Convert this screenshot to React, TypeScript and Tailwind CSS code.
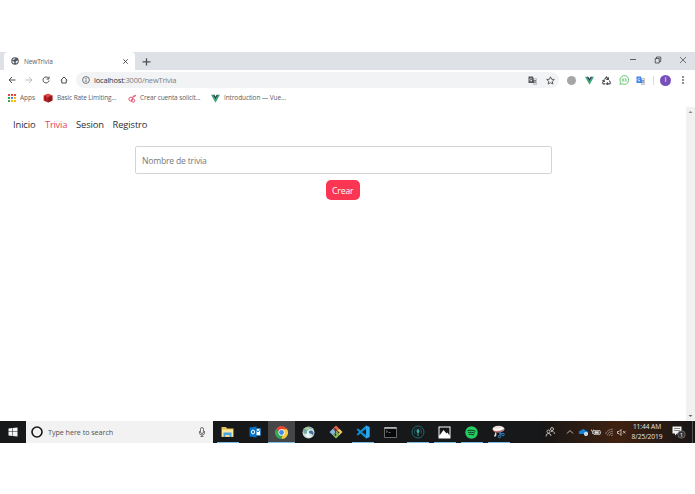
import React from 'react'

const VueLogo = ({size}: {size: number}) => (
  <svg width={size} height={size} viewBox="0 0 24 24">
    <path d="M0 2h6l6 11 6-11h6L12 23z" fill="#41a77b" />
    <path d="M5 2h4l3 5 3-5h4l-7 12z" fill="#293d4d" />
  </svg>
)

const Globe = () => (
  <svg width="8" height="8" viewBox="0 0 16 16">
    <circle cx="8" cy="8" r="7.5" fill="#50545a" />
    <path
      d="M2 8l3 .5 2 2-1 3q-4-2-4-5.500zM9 2q-1 3-3 3L4 7 3 5q2-3 6-3zM10 8l4-1q0 4-3 6l-2-2z"
      fill="#e8eaec"
    />
  </svg>
)

const Stroke = ({
  d,
  size = 8,
  color = '#4b4e52',
  width = 1.8,
}: {
  d: string
  size?: number
  color?: string
  width?: number
}) => (
  <svg
    className="shrink-0"
    width={size}
    height={size}
    viewBox="0 0 16 16"
    fill="none"
    stroke={color}
    strokeWidth={width}
  >
    <path d={d} />
  </svg>
)

const Translate = ({blue}: {blue?: boolean}) => (
  <svg width="9" height="9" viewBox="0 0 18 18">
    <path d="M8 5h9v12h-6z" fill="#dfe1e4" stroke="#9a9ea2" />
    <path d="M1 1h9l3 13H1z" fill={blue ? '#4384ed' : '#54585d'} />
    <path
      d="M8 6a2.500 2.500 0 1 0 0 3H6"
      fill="none"
      stroke="#fff"
      strokeWidth="1.3"
    />
    <path
      d="M12 9h4M15 9q0 3-2 4M13 11l3 3"
      fill="none"
      stroke={blue ? '#5578aa' : '#54585d'}
      strokeWidth="1.2"
    />
  </svg>
)

const TitleBar = () => (
  <div className="flex h-[18px] bg-[#dee1e6] pl-1">
    <div className="flex w-[131px] items-center rounded-t-[4px] bg-white pl-[7px] pr-[6px]">
      <Globe />
      <span className="ml-[5px] flex-1 pt-px text-[6.5px] tracking-[-0.14px] text-[#5b5e62]">
        NewTrivia
      </span>
      <Stroke d="M3 3l10 10m0-10L3 13" size={7} width={2.2} />
    </div>
    <div className="ml-[7px] flex items-center">
      <Stroke d="M8 2v13M1 8.500h14" size={9} width={2.2} />
    </div>
    <div className="ml-auto flex h-[15px] items-center gap-[17px] pr-[8px]">
      <Stroke d="M2 7h12" />
      <Stroke d="M2.500 5h8v9h-8zM5 5V2h8.500v9H11" width={1.8} />
      <Stroke d="M2 2l12 12M14 2L2 14" width={1.5} />
    </div>
  </div>
)

const Toolbar = () => (
  <div className="flex h-5 items-center pl-2">
    <Stroke d="M15 8H2M8 2L2 8l6 6" width={2} />
    <span className="w-[9px]" />
    <Stroke d="M1 8h13M8 2l6 6-6 6" color="#b4b6b9" />
    <span className="w-[9px]" />
    <Stroke d="M13 4.500A6 6 0 1 0 14 9M14 1v5H9" width={2} />
    <span className="w-[10px]" />
    <Stroke d="M1.500 8.500L8 2l6.500 6.500M3.500 7v7h9V7" width={2} />
    <div className="ml-[8px] flex h-4 w-[483px] items-center rounded-full bg-[#f1f3f4] pl-[6px] pr-[4px]">
      <svg width="8" height="8" viewBox="0 0 16 16">
        <circle
          cx="8"
          cy="8"
          r="6.8"
          fill="none"
          stroke="#5a5d61"
          strokeWidth="1.7"
        />
        <path d="M8 7v5M8 4v2" stroke="#5a5d61" strokeWidth="1.8" />
      </svg>
      <span className="ml-1 flex-1 pt-px text-[7.5px] tracking-[-0.19px] text-[#7d8084]">
        <span className="text-[#303236]">localhost</span>:3000/newTrivia
      </span>
      <Translate />
      <span className="w-[9px]" />
      <Stroke
        d="M8 1.500l2 4.300 4.700.5-3.500 3.200 1 4.800L8 11.900l-4.200 2.400 1-4.800-3.500-3.200 4.700-.5z"
        size={9}
        width={1.6}
      />
    </div>
    <div className="ml-[8px] size-[9px] rounded-full bg-[#a5a6a8]" />
    <div className="ml-[9px]">
      <VueLogo size={9} />
    </div>
    <svg
      className="ml-[8px]"
      width="9"
      height="9"
      viewBox="0 0 16 16"
      fill="none"
      stroke="#4b4e52"
      strokeWidth="1.8"
    >
      <path d="M4.500 6L8 1.500l3 4M11.500 2v4h-4M13 8l2 4-1 2H8.500M10.500 11.500L8 14l2.500 2M6 14H2l-1-2 2.500-4M.5 8.500l3-1 1.500 3" />
    </svg>
    <svg
      className="ml-[8px]"
      width="10"
      height="10"
      viewBox="0 0 16 16"
      fill="none"
      stroke="#5dc36e"
    >
      <path d="M1.500 15l1-3.500a7 7 0 1 1 2.500 2.500z" strokeWidth="1.5" />
      <path
        d="M5 5.500v5M5 8h2V5.500M7 8v2.500M9 6h2.500v4H9M9 8h2"
        strokeWidth="1.1"
      />
    </svg>
    <div className="ml-[7px]">
      <Translate blue />
    </div>
    <div className="ml-[8px] h-[9px] w-px bg-[#d9dbdd]" />
    <div className="ml-[6px] flex size-[11px] items-center justify-center rounded-full bg-[#7650b8] text-[7px] text-white">
      I
    </div>
    <svg
      className="ml-[8px]"
      width="8"
      height="10"
      viewBox="0 0 8 10"
      fill="#55585c"
    >
      <circle cx="4" cy="2" r=".9" />
      <circle cx="4" cy="5" r=".9" />
      <circle cx="4" cy="8" r=".9" />
    </svg>
  </div>
)

const Bookmarks = () => (
  <div className="flex h-[17px] items-center pb-px pl-2 text-[6.5px] tracking-[-0.12px] text-[#5b5e62]">
    <div className="grid grid-cols-3 gap-[1px]">
      <i className="size-[2px] bg-[#e9453b]" />
      <i className="size-[2px] bg-[#e9453b]" />
      <i className="size-[2px] bg-[#e9453b]" />
      <i className="size-[2px] bg-[#34a853]" />
      <i className="size-[2px] bg-[#4285f4]" />
      <i className="size-[2px] bg-[#fbbc05]" />
      <i className="size-[2px] bg-[#34a853]" />
      <i className="size-[2px] bg-[#fbbc05]" />
      <i className="size-[2px] bg-[#fbbc05]" />
    </div>
    <span className="ml-[4px] w-[23px] tracking-[0px]">Apps</span>
    <svg width="10" height="10" viewBox="0 0 16 16">
      <path d="M1 4l7-3 7 3v8l-7 3-7-3z" fill="#b52124" />
      <path d="M1 4l7-3 7 3-7 3z" fill="#dc4a46" />
      <path d="M8 7l7-3v8l-7 3z" fill="#981b20" />
      <path d="M4 5v8M11 5v8" stroke="#7f171b" />
    </svg>
    <span className="ml-[4px] w-[71px] whitespace-nowrap">
      Basic Rate Limiting...
    </span>
    <svg
      width="9"
      height="9"
      viewBox="0 0 16 16"
      fill="none"
      stroke="#dc4663"
      strokeWidth="1.6"
    >
      <circle cx="5" cy="9" r="3.5" />
      <circle cx="9" cy="11.500" r="3" />
      <path d="M8 6q1-4 6-4-1 4-6 4" fill="#ed8498" strokeWidth="1" />
    </svg>
    <span className="ml-[3px] w-[71px] whitespace-nowrap">
      Crear cuenta solicit...
    </span>
    <VueLogo size={9} />
    <span className="ml-[4px] whitespace-nowrap tracking-[-0.11px]">
      Introduction — Vue...
    </span>
  </div>
)

const Page = () => (
  <div className="flex h-[314px]">
    <main className="flex-1">
      <nav className="flex h-[35px] items-center gap-[9px] pl-[13px] pt-[2px] text-[9.4px] tracking-[-0.12px] text-[#2d3034]">
        <a className="w-[23px]">Inicio</a>
        <a className="w-[22px] tracking-[-0.25px] text-[#e84460]">Trivia</a>
        <a className="w-[27.5px]">Sesion</a>
        <a>Registro</a>
      </nav>
      <form className="ml-[135px] mt-[4px] flex w-[416.5px] flex-col items-center">
        <div className="flex h-7 w-full items-center rounded-[2px] border border-[#d2d4d6] pl-[6px] pt-[2px] text-[8.6px] tracking-[-0.2px] text-[#74797e]">
          Nombre de trivia
        </div>
        <button
          type="button"
          className="mr-[1px] mt-[6px] h-5 w-[34px] rounded-[5px] bg-[#fa3653] pt-[2px] text-[8.6px] tracking-[-0.1px] text-white"
        >
          Crear
        </button>
      </form>
    </main>
    <div className="flex w-[9px] flex-col items-center justify-between bg-[#f1f1f1] py-[3px]">
      <svg width="5" height="4" viewBox="0 0 5 4">
        <path d="M.5 3l2-2 2 2z" fill="#85878a" />
      </svg>
      <svg width="5" height="4" viewBox="0 0 5 4">
        <path d="M.5 1l2 2 2-2z" fill="#65676a" />
      </svg>
    </div>
  </div>
)

const Explorer = () => (
  <svg width="13" height="12" viewBox="0 0 26 24">
    <path d="M1 2h9l2 3h13v17H1z" fill="#e8bf55" />
    <path d="M2 7h22v14H2z" fill="#fbe6a0" />
    <path d="M5 13h16v9h-4v-4H9v4H5z" fill="#49a5df" />
  </svg>
)

const Outlook = () => (
  <svg width="12" height="12" viewBox="0 0 24 24">
    <path d="M12 5h11v14H12z" fill="#fff" stroke="#0872c6" strokeWidth="1.5" />
    <path
      d="M13 6l5 6 5-6"
      fill="none"
      stroke="#0872c6"
      strokeWidth="2"
    />
    <path d="M1 3l14-2v22L1 21z" fill="#0872c6" />
    <ellipse
      cx="8"
      cy="12"
      rx="3"
      ry="4"
      fill="none"
      stroke="#fff"
      strokeWidth="2"
    />
  </svg>
)

const Chrome = () => (
  <svg width="13" height="13" viewBox="0 0 24 24">
    <path d="M12 12L1.600 6a12 12 0 0 1 20.800 0z" fill="#e44738" />
    <path d="M12 12V6h10.400A12 12 0 0 1 12 24z" fill="#f8cb3d" />
    <path d="M12 12l2 6-2 6A12 12 0 0 1 1.600 6z" fill="#36a853" />
    <circle cx="12" cy="12" r="5.800" fill="#fff" />
    <circle cx="12" cy="12" r="4.500" fill="#4786ed" />
  </svg>
)

const Cmder = () => (
  <svg width="13" height="13" viewBox="0 0 24 24">
    <circle cx="12" cy="12" r="11" fill="#c9dadd" />
    <path d="M2 9q3-8 11-7 5 1 7 4-8-3-10 3-1 5 3 8-9 2-11-8z" fill="#76a9a0" />
    <path d="M5 5q5-4 11-1l-7 3z" fill="#b9d389" />
    <path d="M4 13q6 5 5-3 3-4 7-2-5 2-3 7 2 4 6 4-9 7-15-6z" fill="#eef4f5" />
    <path d="M12 11q3-4 7-2 4 4 1 8-2-4-5-3z" fill="#39719c" />
  </svg>
)

const Git = () => (
  <svg width="14" height="14" viewBox="0 0 28 28">
    <path d="M14 1l6.500 6.500L14 14 7.500 7.500z" fill="#ef6550" />
    <path d="M7.500 7.500L14 14l-6.500 6.500L1 14z" fill="#82b6df" />
    <path d="M20.500 7.500L27 14l-6.500 6.500L14 14z" fill="#efd257" />
    <path d="M14 14l6.500 6.500L14 27l-6.500-6.500z" fill="#8ac365" />
    <path d="M9 5l10 10M13 9v11" stroke="#333" strokeWidth="1.500" />
    <circle cx="13" cy="9" r="2" fill="#333" />
    <circle cx="19" cy="15" r="2" fill="#333" />
    <circle cx="13" cy="20" r="2" fill="#333" />
  </svg>
)

const Code = () => (
  <svg width="14" height="14" viewBox="0 0 28 28">
    <path
      d="M20 1l7 3v20l-7 3L9 17l-5 4-3-2 5-5-5-5 3-2 5 4zM20 8l-8 6 8 6z"
      fill="#168bd2"
      fillRule="evenodd"
    />
    <path d="M20 1l7 3v20l-7 3z" fill="#2ca5e9" />
  </svg>
)

const Terminal = () => (
  <svg width="13" height="11" viewBox="0 0 26 22">
    <path d="M1 1h24v20H1z" fill="#080808" stroke="#85888a" strokeWidth="1.5" />
    <path d="M1 2h24" stroke="#c4c7c8" strokeWidth="3" />
    <path
      d="M4 7l3 2-3 2M9 11h4"
      fill="none"
      stroke="#aaa"
      strokeWidth="1.3"
    />
  </svg>
)

const Kraken = () => (
  <svg width="14" height="14" viewBox="0 0 28 28" fill="none" stroke="#277b84">
    <circle cx="14" cy="14" r="12" strokeWidth="1.6" />
    <path d="M8 18q-3-8 3-11M20 18q3-8-3-11" strokeWidth="1.2" />
    <path
      d="M14 7q-4 4-3 7l2 2v6h2v-6l2-2q1-3-3-7z"
      fill="#31a7a5"
      stroke="none"
    />
  </svg>
)

const Photos = () => (
  <svg width="13" height="13" viewBox="0 0 26 26">
    <path d="M1 1h24v24H1z" fill="#fff" />
    <path d="M3 3h20v16l-4-6-2 2-6-7-8 11z" fill="#161616" />
  </svg>
)

const Spotify = () => (
  <svg width="13" height="13" viewBox="0 0 24 24">
    <circle cx="12" cy="12" r="11.500" fill="#25ce62" />
    <path
      d="M5.500 8.500q8-2 13 1M6.500 12q6-1.500 11 1M7.500 15.500q5-1 8.500 1"
      fill="none"
      stroke="#173e25"
      strokeWidth="1.900"
      strokeLinecap="round"
    />
  </svg>
)

const Snip = () => (
  <svg width="13" height="14" viewBox="0 0 26 28">
    <ellipse cx="13" cy="8" rx="12" ry="6.500" fill="#e9dcda" />
    <path d="M2 11q10 4 22-3-1 6-11 7-9 1-11-4z" fill="#c4605e" />
    <path d="M4 8q9 3 18-2" stroke="#fff" strokeWidth="3" fill="none" />
    <path d="M7 15q2 4-2 8" stroke="#ddd" strokeWidth="3" fill="none" />
    <g fill="none" stroke="#3583c5" strokeWidth="2">
      <circle cx="15" cy="23" r="2.500" />
      <circle cx="22" cy="19" r="2.500" />
      <path d="M16 21l1-8M20 18l-6-2" />
    </g>
  </svg>
)

const apps = [
  {icon: <Explorer />, open: true},
  {icon: <Outlook />},
  {icon: <Chrome />, open: true, active: true},
  {icon: <Cmder />},
  {icon: <Git />},
  {icon: <Code />, open: true},
  {icon: <Terminal />},
  {icon: <Kraken />, open: true},
  {icon: <Photos />, open: true},
  {icon: <Spotify />, open: true},
  {icon: <Snip />, open: true},
]

const Tray = () => (
  <div className="ml-auto flex h-full w-[154px] items-center bg-gradient-to-r from-[#171615] via-[#402110] to-[#171615] pl-[4px]">
    <svg
      width="10"
      height="10"
      viewBox="0 0 20 20"
      fill="none"
      stroke="#ddd"
      strokeWidth="1.600"
    >
      <circle cx="7" cy="9" r="3" />
      <path d="M2 19q0-6 5-6t5 5" />
      <circle cx="14" cy="4" r="3" />
      <path d="M12 9q6-2 7 5" />
    </svg>
    <span className="w-[11px]" />
    <Stroke d="M2 11l6-6 6 6" color="#ccc" width={1.8} size={8} />
    <svg className="ml-[4px]" width="11" height="10" viewBox="0 0 22 20">
      <path d="M3 14q-4-6 3-7 4-6 9 0 6 0 5 7z" fill="#1683d5" />
      <circle cx="16" cy="14" r="4" fill="#e9f3fa" />
      <path d="M14 14h4" stroke="#1683d5" />
    </svg>
    <svg
      className="ml-[2px]"
      width="10"
      height="9"
      viewBox="0 0 20 18"
      fill="none"
      stroke="#ddd"
    >
      <path d="M6 5h12v8H6zM19 7v4" strokeWidth="1.400" />
      <path d="M8 7h7v4H8z" fill="#ddd" />
      <path d="M1 3v3h4V3M3 6v5h3" strokeWidth="1.400" />
    </svg>
    <svg
      className="ml-[4px]"
      width="9"
      height="9"
      viewBox="0 0 18 18"
      fill="none"
      stroke="#999389"
      strokeWidth="1.500"
    >
      <path d="M1 12Q4 3 16 2M4 15Q6 7 16 6M8 16q2-6 8-6M12 16q1-2 4-2" />
    </svg>
    <svg
      className="ml-[3px]"
      width="9"
      height="9"
      viewBox="0 0 18 18"
      fill="none"
      stroke="#ddd"
      strokeWidth="1.500"
    >
      <path d="M1 7h3l4-4v12l-4-4H1zM12 6l5 5M17 6l-5 5" />
    </svg>
    <div className="ml-[3px] w-[36px] whitespace-nowrap text-center text-[6.600px] leading-[10px] tracking-[-0.05px] text-[#e9e5e1]">
      <div>11:44 AM</div>
      <div>8/25/2019</div>
    </div>
    <svg className="ml-[7px]" width="14" height="14" viewBox="0 0 28 28">
      <path d="M1 3h18v14h-9l-4 4v-4H1z" fill="#f3f3f3" />
      <path d="M4 7h12M4 11h12" stroke="#555" strokeWidth="1.300" />
      <circle
        cx="19"
        cy="19"
        r="7.5"
        fill="#353535"
        stroke="#888"
        strokeWidth="1.300"
      />
      <text x="19" y="23" textAnchor="middle" fontSize="12" fill="#fff">
        1
      </text>
    </svg>
    <span className="ml-auto mr-[2px] h-full w-px bg-[#555]" />
  </div>
)

const Taskbar = () => (
  <div className="flex h-[22px] items-center bg-[#171819]">
    <div className="flex w-[26px] justify-center">
      <svg width="10" height="10" viewBox="0 0 20 20" fill="#f4f4f4">
        <path d="M1 3l7-1v7H1zM9 2l10-1v8H9zM1 10h7v8l-7-1zM9 10h10v9L9 18z" />
      </svg>
    </div>
    <div className="flex h-full w-[187px] items-center bg-[#f2f2f2] pl-[5px] pr-[6px]">
      <svg width="12" height="12" viewBox="0 0 24 24">
        <circle
          cx="12"
          cy="12"
          r="10"
          fill="none"
          stroke="#161616"
          strokeWidth="3.2"
        />
      </svg>
      <span className="ml-[5px] flex-1 pt-px text-[7.200px] tracking-[-0.05px] text-[#505154]">
        Type here to search
      </span>
      <svg
        width="10"
        height="10"
        viewBox="0 0 20 20"
        fill="none"
        stroke="#555"
        strokeWidth="1.600"
      >
        <rect x="7" y="1" width="6" height="12" rx="3" />
        <path d="M5 8v4q0 4 5 4t5-4V8M10 16v3M7 19h6" />
      </svg>
    </div>
    <div className="ml-px flex h-full">
      {apps.map(({icon, open, active}, index) => (
        <div
          key={index}
          className={`flex w-[27.15px] flex-col items-center ${active ? 'bg-[#444648]' : ''}`}
        >
          <div className="flex h-[21px] items-center pt-px">{icon}</div>
          <div
            className={`h-px ${active ? 'w-full' : 'w-[22px]'} ${open ? 'bg-[#7bbce7]' : ''}`}
          />
        </div>
      ))}
    </div>
    <Tray />
  </div>
)

const App = () => (
  <div className="h-[494px] w-[695px] overflow-hidden bg-white pt-[52px] font-['Open_Sans',sans-serif]">
    <TitleBar />
    <Toolbar />
    <Bookmarks />
    <Page />
    <Taskbar />
  </div>
)

export default App
